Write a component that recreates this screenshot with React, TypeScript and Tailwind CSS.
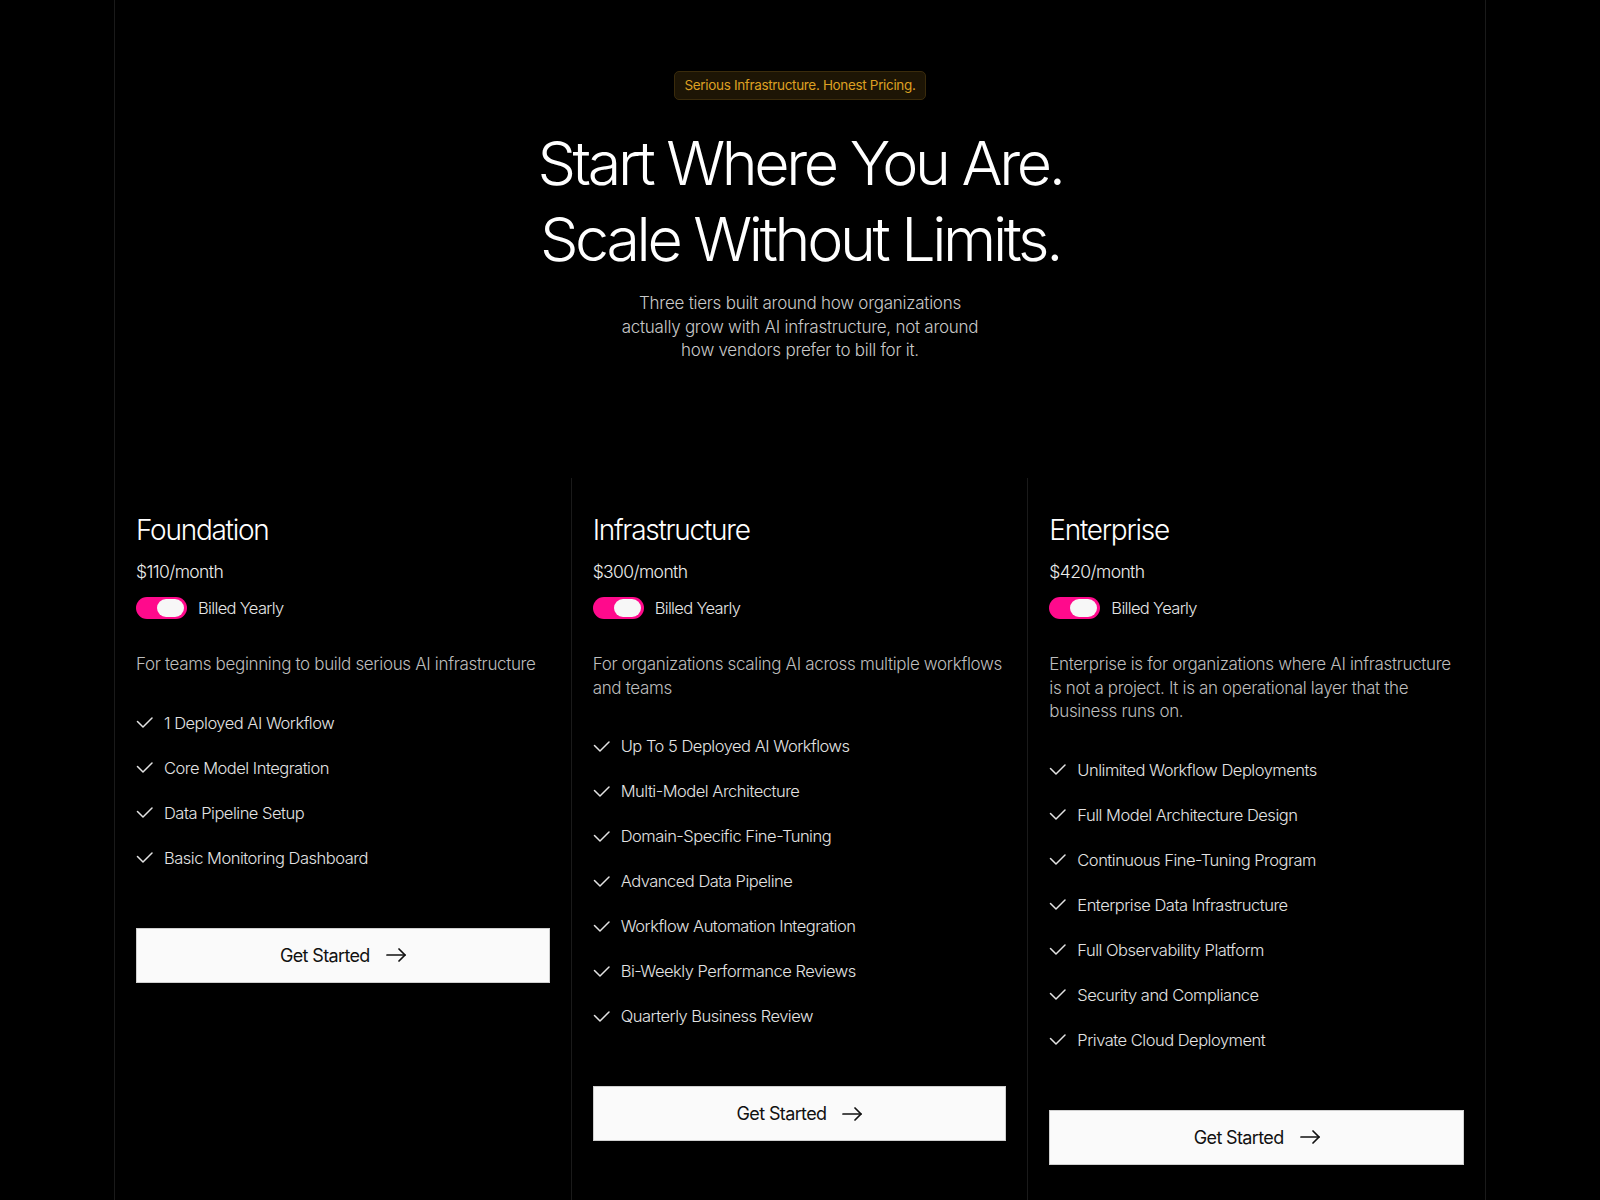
const tiers = [
  {
    name: 'Foundation',
    price: '$110/month',
    description: 'For teams beginning to build serious AI infrastructure',
    features: ['1 Deployed AI Workflow', 'Core Model Integration', 'Data Pipeline Setup', 'Basic Monitoring Dashboard'],
  },
  {
    name: 'Infrastructure',
    price: '$300/month',
    description: 'For organizations scaling AI across multiple workflows and teams',
    features: [
      'Up To 5 Deployed AI Workflows',
      'Multi-Model Architecture',
      'Domain-Specific Fine-Tuning',
      'Advanced Data Pipeline',
      'Workflow Automation Integration',
      'Bi-Weekly Performance Reviews',
      'Quarterly Business Review',
    ],
  },
  {
    name: 'Enterprise',
    price: '$420/month',
    description:
      'Enterprise is for organizations where AI infrastructure is not a project. It is an operational layer that the business runs on.',
    features: [
      'Unlimited Workflow Deployments',
      'Full Model Architecture Design',
      'Continuous Fine-Tuning Program',
      'Enterprise Data Infrastructure',
      'Full Observability Platform',
      'Security and Compliance',
      'Private Cloud Deployment',
    ],
  },
];

function CheckIcon() {
  return (
    <svg width="17" height="11" viewBox="0 0 17 11" fill="none" stroke="currentColor" strokeWidth="1.5" strokeLinecap="round" strokeLinejoin="round" className="shrink-0">
      <path d="M1.5 4.5 7 10l9-9" />
    </svg>
  );
}

function ArrowIcon() {
  return (
    <svg width="20" height="14" viewBox="0 0 20 14" fill="none" stroke="currentColor" strokeWidth="1.7" strokeLinecap="round" strokeLinejoin="round">
      <path d="M1 7h18" />
      <path d="M13 1l6 6-6 6" />
    </svg>
  );
}

function Toggle() {
  return (
    <div className="w-[51px] h-[22px] rounded-full bg-[#ff0a8c] flex items-center justify-end pr-[3px]">
      <div className="w-[27px] h-[18px] rounded-full bg-[#f7f7f7]" />
    </div>
  );
}

export default function App() {
  return (
    <div className="min-h-screen bg-black text-white font-['Inter',sans-serif]">
      <div className="w-[1372px] min-h-[1200px] mx-auto border-x border-[#1a1a1a] flex flex-col">
        <header className="flex flex-col items-center pt-[71px]">
          <span className="px-[10px] h-[29px] flex items-center rounded-[5px] border border-[#3a2b0c] bg-[#1d1505] text-[#dda022] text-[13.5px] tracking-[-0.025em]">
            Serious Infrastructure. Honest Pricing.
          </span>
          <h1 className="mt-[25px] text-center text-[61px] leading-[76px] font-light tracking-[-0.055em]">
            Start Where You Are.
            <br />
            Scale Without Limits.
          </h1>
          <p className="mt-[15px] w-[372px] text-center text-[17px] leading-[23.5px] text-[#c9c9c9] font-light tracking-[-0.015em]">
            Three tiers built around how organizations actually grow with AI infrastructure, not around how vendors prefer to bill for it.
          </p>
        </header>

        <section className="grid grid-cols-3 mt-[115px] flex-1">
          {tiers.map((t, i) => (
            <div key={t.name} className={`px-[21px] pt-[34px] pb-10 ${i < 2 ? 'border-r border-[#1a1a1a]' : ''}`}>
              <h2 className="text-[28px] leading-[36px] font-light tracking-[-0.045em]">{t.name}</h2>
              <div className="mt-[12px] text-[17.5px] leading-[24px] font-light tracking-[-0.035em] text-[#ececec]">{t.price}</div>
              <div className="mt-[12px] flex items-center gap-[11px]">
                <Toggle />
                <span className="text-[16.5px] font-light tracking-[-0.04em] text-[#e6e6e6]">Billed Yearly</span>
              </div>
              <p className="mt-[33px] text-[17px] leading-[23.5px] font-light tracking-[-0.02em] text-[#bdbdbd]">{t.description}</p>
              <ul className="mt-[34px] flex flex-col gap-[21px]">
                {t.features.map(f => (
                  <li key={f} className="flex items-center gap-[11px] text-[16.5px] leading-[24px] font-light tracking-[-0.03em] text-[#e3e3e3]">
                    <CheckIcon />
                    {f}
                  </li>
                ))}
              </ul>
              <button className="mt-[58px] w-full h-[55px] bg-[#fafafa] border border-[#cfcfcf] text-[#111] flex items-center justify-center gap-[16px] text-[18px] tracking-[-0.035em]">
                Get Started
                <ArrowIcon />
              </button>
            </div>
          ))}
        </section>
      </div>
    </div>
  );
}
